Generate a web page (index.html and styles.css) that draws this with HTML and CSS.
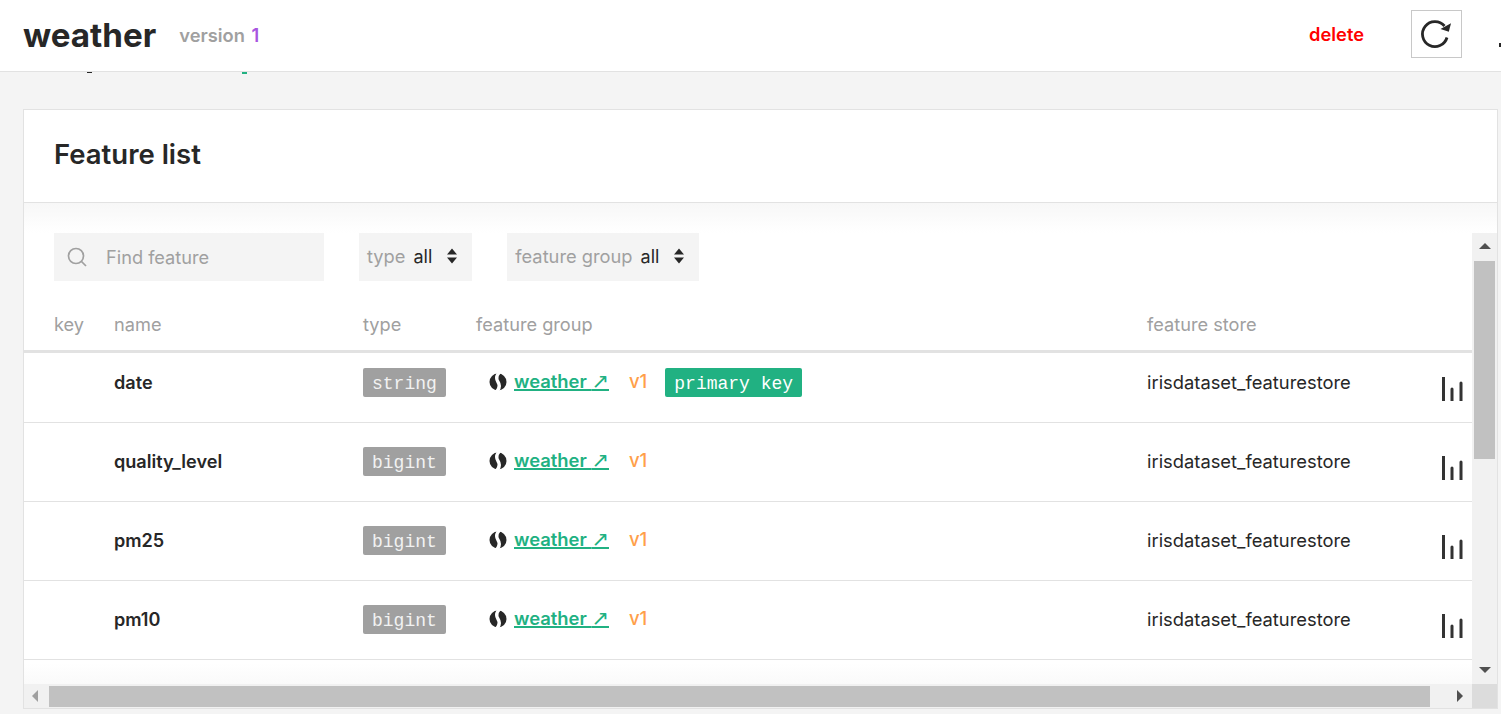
FILE: index.html
```html
<!DOCTYPE html>
<html lang="en">
<head>
  <meta charset="UTF-8" />
  <title>weather - Feature list</title>
  <link rel="stylesheet" href="styles.css">
</head>
<body>

  <header class="topbar">
    <h1 class="title">weather</h1>
    <span class="version">version <b>1</b></span>
    <a class="delete" href="#">delete</a>
    <button class="refresh" aria-label="refresh">
      <svg width="32" height="32" viewBox="0 0 32 32" fill="none">
        <path d="M28 19.5A12.5 12.5 0 1 1 25.5 8" stroke="#272727" stroke-width="2.8"/>
        <path d="M32 5.3L29.8 13.7L21.5 11Z" fill="#272727"/>
      </svg>
    </button>
    <span class="cutoff"></span>
  </header>

  <div class="peek">
    <i class="peek-dark"></i><i class="peek-green"></i>
  </div>

  <main class="content">
    <section class="card">
      <h2 class="card-title">Feature list</h2>
      <div class="fade"></div>

      <div class="scroller">
        <div class="view">
          <div class="filters">
            <label class="search">
              <svg width="22" height="22" viewBox="0 0 22 22" fill="none">
                <circle cx="10" cy="10" r="7.5" stroke="#a0a0a0" stroke-width="1.7"/>
                <path d="M15.5 15.5L20 20" stroke="#a0a0a0" stroke-width="1.7"/>
              </svg>
              <span>Find feature</span>
            </label>
            <div class="select select-type">
              <span class="select-name">type</span><span class="select-value">all</span>
              <svg class="updown" width="10" height="16" viewBox="0 0 10 16"><path d="M5 0.5L10 6.5H0ZM5 15.5L0 9.5H10Z" fill="#272727"/></svg>
            </div>
            <div class="select select-group">
              <span class="select-name">feature group</span><span class="select-value">all</span>
              <svg class="updown" width="10" height="16" viewBox="0 0 10 16"><path d="M5 0.5L10 6.5H0ZM5 15.5L0 9.5H10Z" fill="#272727"/></svg>
            </div>
          </div>

          <div class="row head">
            <span>key</span>
            <span>name</span>
            <span>type</span>
            <span>feature group</span>
            <span>feature store</span>
          </div>

          <div class="row first">
            <span></span>
            <span class="name">date</span>
            <span><span class="tag">string</span></span>
            <span class="group">
              <svg class="logo" width="18" height="18" viewBox="0 0 18 18"><circle cx="9" cy="9" r="8.5" fill="#272727"/><path d="M10.5 -1C7 3 7 6 9 9C11 12 11 15 7.5 19" stroke="#fff" stroke-width="3.4" fill="none"/></svg>
              <a class="fg-link" href="#">weather <span class="fg-arrow">↗</span></a>
              <span class="fg-version">v1</span>
              <span class="tag tag-key">primary key</span>
            </span>
            <span class="store">irisdataset_featurestore</span>
            <svg class="bars" width="24" height="24" viewBox="0 0 24 24"><path d="M2.5 0V24M11 12V24M20 6V24" stroke="#333" stroke-width="3" stroke-linecap="round"/></svg>
          </div>

          <div class="row">
            <span></span>
            <span class="name">quality_level</span>
            <span><span class="tag">bigint</span></span>
            <span class="group">
              <svg class="logo" width="18" height="18" viewBox="0 0 18 18"><circle cx="9" cy="9" r="8.5" fill="#272727"/><path d="M10.5 -1C7 3 7 6 9 9C11 12 11 15 7.5 19" stroke="#fff" stroke-width="3.4" fill="none"/></svg>
              <a class="fg-link" href="#">weather <span class="fg-arrow">↗</span></a>
              <span class="fg-version">v1</span>
            </span>
            <span class="store">irisdataset_featurestore</span>
            <svg class="bars" width="24" height="24" viewBox="0 0 24 24"><path d="M2.5 0V24M11 12V24M20 6V24" stroke="#333" stroke-width="3" stroke-linecap="round"/></svg>
          </div>

          <div class="row">
            <span></span>
            <span class="name">pm25</span>
            <span><span class="tag">bigint</span></span>
            <span class="group">
              <svg class="logo" width="18" height="18" viewBox="0 0 18 18"><circle cx="9" cy="9" r="8.5" fill="#272727"/><path d="M10.5 -1C7 3 7 6 9 9C11 12 11 15 7.5 19" stroke="#fff" stroke-width="3.4" fill="none"/></svg>
              <a class="fg-link" href="#">weather <span class="fg-arrow">↗</span></a>
              <span class="fg-version">v1</span>
            </span>
            <span class="store">irisdataset_featurestore</span>
            <svg class="bars" width="24" height="24" viewBox="0 0 24 24"><path d="M2.5 0V24M11 12V24M20 6V24" stroke="#333" stroke-width="3" stroke-linecap="round"/></svg>
          </div>

          <div class="row">
            <span></span>
            <span class="name">pm10</span>
            <span><span class="tag">bigint</span></span>
            <span class="group">
              <svg class="logo" width="18" height="18" viewBox="0 0 18 18"><circle cx="9" cy="9" r="8.5" fill="#272727"/><path d="M10.5 -1C7 3 7 6 9 9C11 12 11 15 7.5 19" stroke="#fff" stroke-width="3.4" fill="none"/></svg>
              <a class="fg-link" href="#">weather <span class="fg-arrow">↗</span></a>
              <span class="fg-version">v1</span>
            </span>
            <span class="store">irisdataset_featurestore</span>
            <svg class="bars" width="24" height="24" viewBox="0 0 24 24"><path d="M2.5 0V24M11 12V24M20 6V24" stroke="#333" stroke-width="3" stroke-linecap="round"/></svg>
          </div>
        </div>

        <div class="vbar">
          <i class="arrow arrow-up"></i>
          <div class="vthumb"></div>
          <i class="arrow arrow-down"></i>
        </div>
        <div class="hbar">
          <i class="arrow arrow-left"></i>
          <div class="hthumb"></div>
          <i class="arrow arrow-right"></i>
        </div>
        <div class="corner"></div>
      </div>
    </section>
  </main>

</body>
</html>
```
FILE: styles.css
```css
html, body {
  height: 100%;
}
body {
  margin: 0;
  overflow: hidden;
  background: #f4f4f4;
  color: #272727;
  font-family: Inter, "Liberation Sans", sans-serif;
  font-size: 18px;
}
a {
  text-decoration: none;
}

.topbar {
  display: flex;
  align-items: center;
  height: 71px;
  padding-left: 23px;
  background: #fff;
  border-bottom: 1px solid #e2e2e2;
  overflow: hidden;
}
.title {
  margin: 0 0 2px;
  font-size: 33.2px;
  font-weight: 700;
}
.version {
  margin-left: 23px;
  margin-bottom: 1px;
  color: #a0a0a0;
  font-weight: 600;
  font-size: 18.3px;
}
.version b {
  margin-left: 2px;
  color: #a855e0;
  font-weight: 600;
}
.delete {
  margin-left: auto;
  margin-bottom: 4px;
  color: #ff0000;
  font-weight: 600;
  font-size: 18.3px;
}
.refresh {
  display: flex;
  align-items: center;
  justify-content: center;
  width: 51px;
  height: 48px;
  margin-left: 47px;
  margin-bottom: 4px;
  padding: 0 4px 0 0;
  background: #fff;
  border: 1px solid #c8c8c8;
}
.cutoff {
  flex: none;
  width: 2px;
  height: 4px;
  margin: 19px 0 0 37px;
  background: #272727;
}

.peek {
  display: flex;
  height: 2px;
  margin-bottom: -2px;
}
.peek-dark {
  width: 5px;
  height: 1px;
  margin-left: 87px;
  background: #272727;
}
.peek-green {
  width: 5px;
  height: 2px;
  margin-left: 150px;
  background: #21b182;
}

.content {
  padding: 37px 3px 0 23px;
}
.card {
  display: flex;
  flex-direction: column;
  height: 598px;
  background: #fff;
  border: 1px solid #e2e2e2;
}
.card-title {
  margin: 0;
  height: 92px;
  padding-left: 30px;
  border-bottom: 1px solid #e2e2e2;
  font-size: 27.5px;
  font-weight: 600;
  line-height: 88px;
}
.fade {
  flex: none;
  height: 30px;
  background: linear-gradient(#f7f7f7, #fff);
}

.scroller {
  flex: 1;
  display: grid;
  grid-template-columns: 1fr 25px;
  grid-template-rows: 451px 24px;
  min-height: 0;
}
.view {
  overflow: hidden;
  background: linear-gradient(#fff 430px, #fafafa);
}

.filters {
  display: flex;
  gap: 35px;
  height: 48px;
  padding-left: 30px;
}
.search {
  display: flex;
  align-items: center;
  width: 270px;
  padding-left: 12px;
  box-sizing: border-box;
  background: #f4f4f4;
  color: #a0a0a0;
}
.search span {
  margin-left: 18px;
  font-size: 18.2px;
}
.select {
  display: flex;
  align-items: center;
  padding: 0 15px 2px 8px;
  background: #f4f4f4;
}
.select-name {
  color: #a0a0a0;
  font-size: 18.3px;
}
.select-value {
  margin-left: 8px;
  margin-right: 15px;
}
.updown {
  flex: none;
}

.row {
  display: grid;
  grid-template-columns: 60px 249px 113px 671px 294px 1fr;
  align-items: center;
  height: 78px;
  padding-left: 30px;
  border-bottom: 1px solid #e2e2e2;
}
.row.head {
  height: 72px;
  padding-top: 20px;
  padding-bottom: 3px;
  box-sizing: border-box;
  border-bottom: 3px solid #e2e2e2;
  color: #a0a0a0;
  font-size: 18.2px;
}
.row.first {
  height: 60px;
  padding-bottom: 9px;
}
.name {
  margin-bottom: 2px;
  font-weight: 600;
  font-size: 18.1px;
}
.store {
  margin-bottom: 2px;
  font-size: 18.35px;
}
.tag {
  display: inline-block;
  margin-top: -2px;
  padding: 0 9px;
  height: 29px;
  border-radius: 2px;
  background: #a0a0a0;
  color: #f2f2f2;
  font-family: "Liberation Mono", monospace;
  font-size: 18px;
  line-height: 33px;
  vertical-align: middle;
}
.tag-key {
  margin-left: 18px;
  background: #21b182;
  color: #fff;
}
.group {
  display: flex;
  align-items: center;
  padding-left: 13px;
}
.logo {
  margin-bottom: 2px;
}
.fg-link {
  margin-left: 7px;
  margin-bottom: 4px;
  color: #21b182;
  font-weight: 600;
  font-size: 18.4px;
  text-decoration: underline;
  text-decoration-thickness: 2px;
  text-underline-offset: 1px;
}
.fg-arrow {
  font-family: "DejaVu Sans", sans-serif;
  font-weight: 400;
  font-size: 21px;
  line-height: 1;
}
.fg-version {
  margin-left: 20px;
  margin-bottom: 4px;
  color: #ff9f4a;
  font-weight: 500;
  font-size: 18.5px;
}
.bars {
  margin-top: 12px;
}

.vbar {
  display: flex;
  flex-direction: column;
  align-items: center;
  padding-top: 10px;
  background: #f1f1f1;
  box-sizing: border-box;
}
.vthumb {
  flex: none;
  width: 21px;
  height: 198px;
  margin-top: 12px;
  background: #c1c1c1;
}
.hbar {
  display: flex;
  align-items: center;
  padding-left: 8px;
  background: #f1f1f1;
}
.hthumb {
  flex: none;
  width: 1381px;
  height: 21px;
  margin-left: 11px;
  background: #c1c1c1;
}
.corner {
  background: #dcdcdc;
}
.arrow {
  flex: none;
  width: 0;
  height: 0;
  border-style: solid;
}
.arrow-up {
  border-width: 0 6px 6px;
  border-color: transparent transparent #505050;
}
.arrow-down {
  margin-top: 208px;
  border-width: 6px 6px 0;
  border-color: #505050 transparent transparent;
}
.arrow-left {
  border-width: 6px 6px 6px 0;
  border-color: transparent #a0a0a0 transparent transparent;
}
.arrow-right {
  margin-left: 27px;
  border-width: 6px 0 6px 6px;
  border-color: transparent transparent transparent #505050;
}
```
